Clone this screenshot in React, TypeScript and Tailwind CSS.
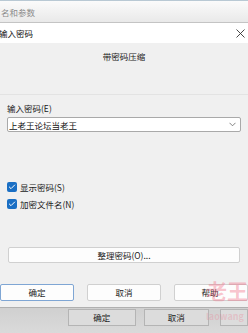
import { Check } from 'lucide-react';

const font = { fontFamily: '"Noto Sans CJK SC", "Noto Sans", sans-serif' };

function Checkbox({ label }: { label: string }) {
  return (
    <div className="flex items-center h-[12px] leading-[12px]">
      <div className="w-[10px] h-[10px] rounded-[2px] bg-[#1a6fc4] flex items-center justify-center">
        <Check size={8} strokeWidth={3} className="text-white" />
      </div>
      <span className="ml-[3px] text-[8.5px] text-[#1a1a1a]">{label}</span>
    </div>
  );
}

export default function App() {
  return (
    <div
      className="w-[248px] h-[333px] overflow-hidden relative bg-[#f0f0f0] flex flex-col"
      style={font}
    >
      {/* parent window title */}
      <div className="h-[23px] shrink-0 bg-gradient-to-b from-[#fbfbfb] to-[#e9e9e9] border-t border-t-[#b9c9d4] border-b border-b-[#c4c4c4] flex items-center">
        <span className="ml-px text-[8.5px] text-[#8a8a8a] leading-[12px]">名和参数</span>
      </div>

      {/* dialog title */}
      <div className="h-[20px] shrink-0 bg-white flex items-center justify-between">
        <span className="ml-[-1px] text-[8.5px] text-[#111] leading-[12px]">输入密码</span>
        <svg width="9" height="9" viewBox="0 0 9 9" className="mr-[3px]">
          <path d="M0.5 0.5L8.5 8.5M8.5 0.5L0.5 8.5" stroke="#333" strokeWidth="0.9" fill="none" />
        </svg>
      </div>

      {/* dialog body */}
      <div className="h-[264px] shrink-0 bg-[#f0f0f0] pt-[7px] pb-[6px] flex flex-col">
        <div className="h-[12px] leading-[12px] text-center text-[8.5px] text-[#1a1a1a]">带密码压缩</div>
        <div className="mt-[32px] h-px bg-[#e3e3e3]" />

        <div className="px-[7px] flex flex-col">
          <div className="mt-[7px] h-[12px] leading-[12px] text-[8.5px] text-[#1a1a1a]">输入密码(E)</div>
          <div className="mt-[3px] h-[15px] bg-white border border-[#a9a9a9] rounded-[2px] flex items-center justify-between">
            <span className="ml-[1px] text-[8.5px] leading-[12px] text-[#111]">上老王论坛当老王</span>
            <svg width="7" height="5" viewBox="0 0 7 5" className="mr-[4px]">
              <path d="M0.5 0.8L3.5 3.8L6.5 0.8" stroke="#666" strokeWidth="0.8" fill="none" />
            </svg>
          </div>

          <div className="mt-[49px]">
            <Checkbox label="显示密码(S)" />
          </div>
          <div className="mt-[5px]">
            <Checkbox label="加密文件名(N)" />
          </div>

          <div className="mt-[37px] mx-px h-[16px] bg-[#fdfdfd] border border-[#d0d0d0] rounded-[2px] flex items-center justify-center text-[8.5px] text-[#1a1a1a]">
            整理密码(O)...
          </div>
        </div>

        <div className="mt-[21px] h-[17px] flex justify-between text-[8.5px] text-[#1a1a1a]">
          <div className="w-[74px] bg-[#fdfdfd] border border-[#7fa6d4] rounded-[2px] flex items-center justify-center">确定</div>
          <div className="w-[74px] bg-[#fdfdfd] border border-[#d0d0d0] rounded-[2px] flex items-center justify-center">取消</div>
          <div className="w-[74px] bg-[#fdfdfd] border border-[#d0d0d0] rounded-[2px] flex items-center justify-center pr-[2px]">帮助</div>
        </div>
      </div>

      {/* parent window buttons */}
      <div className="flex-1 bg-gradient-to-b from-[#d0d0d0] to-[#dadada] border-t border-[#b0b0b0] pt-[1px] flex text-[8.5px] text-[#1a1a1a]">
        <div className="ml-[68px] w-[72px] h-[17px] bg-[#dcdcdc] border border-[#b4b4b4] flex items-center justify-center">确定</div>
        <div className="ml-[8px] w-[69px] h-[17px] bg-[#dcdcdc] border border-[#b4b4b4] flex items-center justify-center">取消</div>
        <div className="ml-[11px] w-[30px] h-[17px] bg-[#dcdcdc] border border-[#b4b4b4]" />
      </div>

      {/* watermark */}
      <div className="absolute left-[206px] top-[278px] text-[21px] font-bold leading-[24px] text-[#f06a82]/40 whitespace-nowrap pointer-events-none">
        老王
      </div>
      <div className="absolute left-[206px] top-[312px] text-[9px] font-bold leading-[10px] text-[#f06a82]/25 whitespace-nowrap pointer-events-none">
        laowang
      </div>
    </div>
  );
}
